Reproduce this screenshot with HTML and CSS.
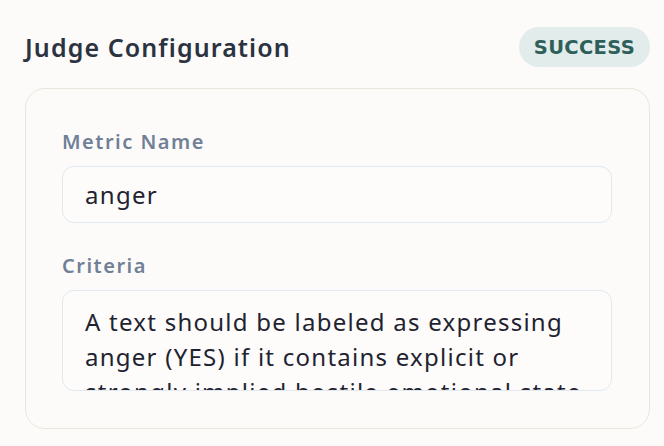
FILE: index.html
```html
<!DOCTYPE html>
<html>
<head>
<meta charset="utf-8">
<link rel="stylesheet" href="styles.css">
</head>
<body>
<div class="page">
  <header class="head">
    <h2 class="title">Judge Configuration</h2>
    <span class="badge">SUCCESS</span>
  </header>
  <section class="card">
    <div class="field">
      <label class="label">Metric Name</label>
      <div class="input">anger</div>
    </div>
    <div class="field">
      <label class="label">Criteria</label>
      <div class="textarea">A text should be labeled as expressing<br>anger (YES) if it contains explicit or<br>strongly implied hostile emotional state<br>toward a person, group, or situation.</div>
    </div>
  </section>
</div>
</body>
</html>
```
FILE: styles.css
```css
html, body {
  margin: 0;
  padding: 0;
  background: #fcfbf9;
}
body {
  font-family: "Noto Sans", "Open Sans", sans-serif;
  color: #1f2330;
}
.page {
  padding: 27px 14px 0 25px;
}
.head {
  display: flex;
  justify-content: space-between;
  align-items: center;
  height: 40px;
}
.title {
  margin: 0;
  font-size: 25px;
  font-weight: 600;
  letter-spacing: 1.1px;
  color: #2b3240;
  line-height: 1;
}
.badge {
  display: flex;
  align-items: center;
  height: 40px;
  padding: 0 15px;
  border-radius: 20px;
  background: #e2edeb;
  color: #2f5f5b;
  font-family: "DejaVu Sans", sans-serif;
  font-size: 19.5px;
  font-weight: 700;
  letter-spacing: 0.3px;
}
.card {
  margin-top: 21px;
  border: 1px solid #ebe6dd;
  border-radius: 20px;
  padding: 39px 37px 37px 36px;
  display: flex;
  flex-direction: column;
  gap: 29px;
}
.field {
  display: flex;
  flex-direction: column;
  gap: 10px;
}
.label {
  font-size: 20px;
  font-weight: 600;
  letter-spacing: 1.5px;
  color: #718096;
  line-height: 28px;
}
.input {
  height: 55px;
  border: 1px solid #e2e8f0;
  border-radius: 12px;
  padding: 0 22px;
  display: flex;
  align-items: center;
  font-size: 24px;
  letter-spacing: 1.3px;
  background: #fdfcfb;
}
.textarea {
  height: 86px;
  border: 1px solid #e2e8f0;
  border-radius: 12px;
  padding: 13px 22px 0;
  font-size: 24px;
  line-height: 35px;
  letter-spacing: 1.25px;
  white-space: nowrap;
  overflow: hidden;
  background: #fdfcfb;
}
```
